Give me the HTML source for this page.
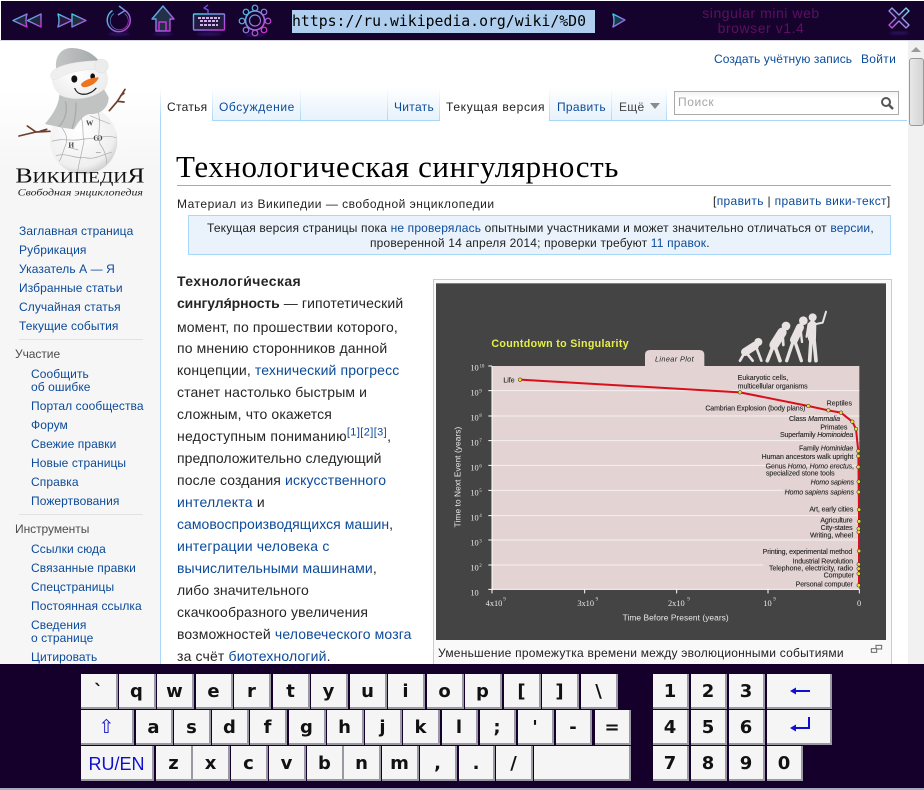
<!DOCTYPE html>
<html lang="ru"><head><meta charset="utf-8"><title>singular mini web browser</title>
<style>
html,body{margin:0;padding:0;background:#fff}
#p{position:relative;width:924px;height:790px;overflow:hidden;background:#fff;font-family:"Liberation Sans","DejaVu Sans",sans-serif;font-size:12px;color:#222}
#p div,#p span.a{position:absolute;white-space:nowrap}
.l{color:#0b4a9a}
a{color:#0b4a9a;text-decoration:none}
.s{line-height:18px;height:18px;letter-spacing:.08px;color:#0b4a9a}
.h{line-height:18px;height:18px;letter-spacing:-.05px;color:#4d4d4d}
.b{font-size:14px;line-height:22px;height:22px;letter-spacing:.13px;color:#252525;left:177px}
.t{line-height:18px;height:18px;letter-spacing:.3px}
.k{background:#f5f5f5;border-right:2px solid #9a98a2;border-bottom:2px solid #9a98a2;box-sizing:border-box;height:35px;top:0;font:bold 18px/35px "DejaVu Sans",sans-serif;color:#111;text-align:center}
.r1{top:674px}.r2{top:710px}.r3{top:746px}
.bl{color:#1010d0;font-weight:normal}
.tab{top:88px;height:33px;box-sizing:border-box;background:linear-gradient(#fff,#a7d7f9) right/1px 100% no-repeat,linear-gradient(#fff 0%,#f2f8fd 50%,#e6f2fb 100%)}
</style></head><body><div id="p">

<!-- sidebar -->
<div style="left:0;top:40px;width:160px;height:624px;background:linear-gradient(#fff 0,#fff 50px,#f6f6f6 130px)"></div>
<div style="left:160px;top:88px;width:1px;height:576px;background:linear-gradient(#fff,#a7d7f9 30px)"></div>

<!-- logo -->
<svg style="position:absolute;left:0;top:44px" width="160" height="160" viewBox="0 0 480 480">
<defs><radialGradient id="gl" cx=".42" cy=".35" r=".72"><stop offset="0" stop-color="#fff"/><stop offset=".75" stop-color="#efefef"/><stop offset="1" stop-color="#c2c2c2"/></radialGradient>
<radialGradient id="hd" cx=".45" cy=".4" r=".7"><stop offset="0" stop-color="#fff"/><stop offset="1" stop-color="#e8e8e8"/></radialGradient>
<linearGradient id="hat" x1="0" y1="0" x2="1" y2="0"><stop offset="0" stop-color="#c4c6c6"/><stop offset="1" stop-color="#a4a8a8"/></linearGradient></defs>
<g fill="none" stroke="#6f3d2a" stroke-width="5" stroke-linecap="round"><path d="M57 276 108 264 150 262M82 246 108 264M120 262 140 256"/><path d="M328 200 352 172 375 136M352 172 372 174M362 155 372 148"/></g>
<circle cx="251" cy="290" r="101" fill="url(#gl)"/>
<g fill="none" stroke="#a8a8a8" stroke-width="2"><path d="M175 235C190 260 205 270 198 300 190 320 185 340 178 352M238 205C255 240 245 270 252 290 245 330 238 350 232 388M295 205C305 240 290 270 300 300 315 320 320 340 320 358M155 292C190 280 220 295 250 285 290 285 320 270 350 282M168 335C200 325 225 345 250 340 285 350 310 330 335 325M270 215 330 240M205 310 235 318"/></g>
<g fill="#444" font-family="Liberation Serif,serif" font-size="22" font-weight="bold"><text x="258" y="245">W</text><text x="205" y="310">И</text><text x="280" y="290">Ѡ</text><text x="288" y="328" font-size="14">—</text></g>
<ellipse cx="240" cy="106" rx="84" ry="66" fill="url(#hd)"/>
<path d="M168 70C165 30 190 10 218 12 252 14 280 28 298 52L290 62C250 58 200 64 168 80Z" fill="url(#hat)"/>
<path d="M152 92C158 66 220 52 292 50L298 76C250 74 192 88 168 106 156 110 150 102 152 92Z" fill="#efefef" stroke="#d8d8d8"/>
<circle cx="304" cy="66" r="21" fill="#ececec" stroke="#d4d4d4"/>
<path d="M178 152C210 172 275 168 312 136L326 160C326 192 300 212 270 210 250 212 236 232 222 256L182 250 135 240C152 218 176 190 178 152Z" fill="#c0c3c2"/>
<path d="M196 172C204 200 195 230 176 248M228 176C228 205 226 226 216 254" stroke="#a8abab" stroke-width="4" fill="none"/>
<ellipse cx="223" cy="105" rx="9" ry="11" fill="#111"/><ellipse cx="278" cy="97" rx="7" ry="9" fill="#111"/>
<path d="M243 120C255 106 278 100 296 100 294 112 276 126 258 129 250 131 243 128 243 120Z" fill="#ee7420"/>
<path d="M224 132C232 156 266 158 289 132" fill="none" stroke="#111" stroke-width="3.5"/>
<text x="240" y="416" text-anchor="middle" font-family="Liberation Serif,serif" font-size="62" textLength="388" lengthAdjust="spacingAndGlyphs" fill="#111">В<tspan font-size="47">ИКИПЕДИ</tspan>Я</text>
<text x="241" y="455" text-anchor="middle" font-family="Liberation Serif,serif" font-size="29" font-style="italic" textLength="376" lengthAdjust="spacingAndGlyphs" fill="#222">Свободная энциклопедия</text>
</svg>

<!-- sidebar links -->
<div class="s" style="left:19px;top:222px">Заглавная страница</div>
<div class="s" style="left:19px;top:241px">Рубрикация</div>
<div class="s" style="left:19px;top:260px">Указатель А — Я</div>
<div class="s" style="left:19px;top:279px">Избранные статьи</div>
<div class="s" style="left:19px;top:298px">Случайная статья</div>
<div class="s" style="left:19px;top:317px">Текущие события</div>
<div style="left:19px;top:339px;width:124px;height:1px;background:#e2e2e2"></div>
<div class="h" style="left:15px;top:345px">Участие</div>
<div class="s" style="left:31px;top:365px">Сообщить</div>
<div class="s" style="left:31px;top:378px">об ошибке</div>
<div class="s" style="left:31px;top:397px">Портал сообщества</div>
<div class="s" style="left:31px;top:416px">Форум</div>
<div class="s" style="left:31px;top:435px">Свежие правки</div>
<div class="s" style="left:31px;top:454px">Новые страницы</div>
<div class="s" style="left:31px;top:473px">Справка</div>
<div class="s" style="left:31px;top:492px">Пожертвования</div>
<div style="left:19px;top:514px;width:124px;height:1px;background:#e2e2e2"></div>
<div class="h" style="left:15px;top:520px">Инструменты</div>
<div class="s" style="left:31px;top:540px">Ссылки сюда</div>
<div class="s" style="left:31px;top:559px">Связанные правки</div>
<div class="s" style="left:31px;top:578px">Спецстраницы</div>
<div class="s" style="left:31px;top:597px">Постоянная ссылка</div>
<div class="s" style="left:31px;top:616px">Сведения</div>
<div class="s" style="left:31px;top:629px">о странице</div>
<div class="s" style="left:31px;top:648px">Цитировать</div>

<!-- top links -->
<div class="t l" style="left:714px;top:50px;letter-spacing:.1px">Создать учётную запись</div>
<div class="t l" style="left:861px;top:50px">Войти</div>

<!-- tabs -->
<div class="tab" style="left:161px;width:52px;background:linear-gradient(#fff,#a7d7f9) right/1px 100% no-repeat,#fff"></div>
<div class="tab" style="left:213px;width:88px"></div>
<div class="tab" style="left:301px;width:87px"></div>
<div class="tab" style="left:388px;width:52px"></div>
<div class="tab" style="left:440px;width:110px;background:linear-gradient(#fff,#a7d7f9) right/1px 100% no-repeat,#fff"></div>
<div class="tab" style="left:550px;width:62px"></div>
<div class="tab" style="left:612px;width:55px"></div>
<div style="left:213px;top:120px;width:227px;height:1px;background:#a7d7f9"></div>
<div style="left:550px;top:120px;width:357px;height:1px;background:#a7d7f9"></div>
<div class="t" style="left:167px;top:98px">Статья</div>
<div class="t l" style="left:219px;top:98px;letter-spacing:.6px">Обсуждение</div>
<div class="t l" style="left:394px;top:98px">Читать</div>
<div class="t" style="left:446px;top:98px;letter-spacing:.66px">Текущая версия</div>
<div class="t l" style="left:557px;top:98px">Править</div>
<div class="t" style="left:619px;top:98px;color:#444">Ещё</div>
<svg style="position:absolute;left:650px;top:103px" width="10" height="7"><path d="M0 0H10L5 6Z" fill="#8b8b8b"/></svg>
<div style="left:674px;top:91px;width:225px;height:24px;box-sizing:border-box;border:1px solid #aaa;background:linear-gradient(#f3f3f3,#fff 30%)"></div>
<div class="t" style="left:678px;top:93px;color:#a5a5a5;letter-spacing:.6px">Поиск</div>
<svg style="position:absolute;left:880px;top:96px" width="14" height="14" viewBox="0 0 14 14"><circle cx="6" cy="6" r="4" fill="none" stroke="#555" stroke-width="2"/><path d="M9 9 13 13" stroke="#555" stroke-width="2.4"/></svg>

<!-- title -->
<div style="left:176px;top:148px;font:31px/38px 'Liberation Serif',serif;letter-spacing:.58px;color:#000">Технологическая сингулярность</div>
<div style="left:177px;top:185px;width:714px;height:1px;background:#aaa"></div>
<div class="t" style="left:177px;top:195px;letter-spacing:.5px">Материал из Википедии — свободной энциклопедии</div>
<div class="t" style="left:713px;top:192px;letter-spacing:.35px">[<a>править</a> | <a>править вики-текст</a>]</div>

<!-- notice -->
<div style="left:188px;top:215px;width:703px;height:40px;box-sizing:border-box;background:#eaf3fb;border:1px solid #a7d7f9"></div>
<div class="t" style="left:207px;top:219px;letter-spacing:.16px">Текущая версия страницы пока <a>не проверялась</a> опытными участниками и может значительно отличаться от <a>версии</a>,</div>
<div class="t" style="left:370px;top:234px;letter-spacing:.18px">проверенной 14 апреля 2014; проверки требуют <a>11 правок</a>.</div>

<!-- body -->
<div class="b" style="top:270px"><b style="letter-spacing:.4px">Технологи́ческая</b></div>
<div class="b" style="top:292px"><b style="letter-spacing:-.1px">сингуля́рность</b> — гипотетический</div>
<div class="b" style="top:316px">момент, по прошествии которого,</div>
<div class="b" style="top:337px">по мнению сторонников данной</div>
<div class="b" style="top:359px">концепции, <a>технический прогресс</a></div>
<div class="b" style="top:381px">станет настолько быстрым и</div>
<div class="b" style="top:403px">сложным, что окажется</div>
<div class="b" style="top:425px;letter-spacing:.23px">недоступным пониманию<sup style="font-size:11px;line-height:0;color:#0b4a9a;letter-spacing:.4px">[1][2][3]</sup>,</div>
<div class="b" style="top:447px;letter-spacing:.05px">предположительно следующий</div>
<div class="b" style="top:469px">после создания <a>искусственного</a></div>
<div class="b" style="top:491px;letter-spacing:.22px"><a>интеллекта</a> и</div>
<div class="b" style="top:513px;letter-spacing:.04px"><a>самовоспроизводящихся машин</a>,</div>
<div class="b" style="top:535px;letter-spacing:.18px"><a>интеграции человека с</a></div>
<div class="b" style="top:557px;letter-spacing:.11px"><a>вычислительными машинами</a>,</div>
<div class="b" style="top:579px">либо значительного</div>
<div class="b" style="top:601px">скачкообразного увеличения</div>
<div class="b" style="top:623px">возможностей <a>человеческого мозга</a></div>
<div class="b" style="top:645px;letter-spacing:.15px">за счёт <a>биотехнологий</a>.</div>

<!-- thumb -->
<div style="left:433px;top:279px;width:459px;height:390px;box-sizing:border-box;border:1px solid #c8ccd1;background:#f9f9f9"></div>
<svg style="position:absolute;left:430px;top:280px" width="470" height="385" viewBox="0 0 1410 1155" font-family="Liberation Sans,sans-serif" font-size="20" fill="#222">
<rect x="18" y="10" width="1350" height="1070" fill="#444"/>
<path d="M645 258V225Q645 210 660 210H808Q823 210 823 225V258Z" fill="#e3d3d3"/>
<rect x="186" y="258" width="1102" height="670" fill="#e3d3d3"/>
<g stroke="#f6f0f0" stroke-width="3"><path d="M186 332H1288M186 408H1288M186 482H1288M186 556H1288M186 631H1060M186 707H1288M186 780H1288M186 855H1000"/></g>
<path d="M186 258V928H1288" fill="none" stroke="#fff" stroke-width="3"/>
<g stroke="#fff" stroke-width="3"><path d="M175 258H186M175 332H186M175 408H186M175 482H186M175 556H186M175 631H186M175 707H186M175 780H186M175 855H186M175 928H186M186 928V940M464 928V940M740 928V940M1014 928V940M1288 928V940"/></g>
<path d="M270 299 930 337 1135 378 1195 391 1233 398 1267 425 1278 447 1285 515 1287 700 1287 915" fill="none" stroke="#d8101c" stroke-width="6"/>
<g fill="#e8e030" stroke="#222" stroke-width="1.5"><circle cx="270" cy="299" r="5.500"/><circle cx="930" cy="337" r="5.500"/><circle cx="1135" cy="378" r="5.500"/><circle cx="1195" cy="391" r="5.500"/><circle cx="1233" cy="398" r="5.500"/><circle cx="1267" cy="425" r="5.500"/><circle cx="1278" cy="447" r="5.500"/><circle cx="1285" cy="513" r="5.500"/><circle cx="1285" cy="528" r="5.500"/><circle cx="1285" cy="561" r="5.500"/><circle cx="1286" cy="605" r="5.500"/><circle cx="1286" cy="636" r="5.500"/><circle cx="1287" cy="689" r="5.500"/><circle cx="1287" cy="724" r="5.500"/><circle cx="1286" cy="746" r="5.500"/><circle cx="1286" cy="756" r="5.500"/><circle cx="1287" cy="813" r="5.500"/><circle cx="1286" cy="853" r="5.500"/><circle cx="1286" cy="866" r="5.500"/><circle cx="1286" cy="881" r="5.500"/><circle cx="1286" cy="916" r="5.500"/></g>
<text x="184" y="201" font-size="32" font-weight="bold" fill="#e6f04a" textLength="412">Countdown to Singularity</text>
<text x="733" y="244" font-size="22" font-style="italic" text-anchor="middle" textLength="116">Linear Plot</text>
<!-- evolution silhouettes -->
<g fill="#e8e2e2"><circle cx="985" cy="186" r="12"/><circle cx="1068" cy="138" r="13"/><circle cx="1120" cy="122" r="13"/><circle cx="1148" cy="112" r="12"/></g>
<g fill="none" stroke="#e8e2e2" stroke-linecap="round" stroke-linejoin="round">
<path d="M975 197 945 216" stroke-width="24"/><path d="M945 216 930 242M952 222 968 242M978 200 994 242" stroke-width="8"/>
<path d="M1056 157 1032 195" stroke-width="28"/><path d="M1030 197 1012 242M1036 202 1050 242" stroke-width="11"/><path d="M1058 165 1060 195" stroke-width="8"/>
<path d="M1110 142 1092 180" stroke-width="24"/><path d="M1090 182 1070 242M1096 188 1114 242" stroke-width="10"/><path d="M1112 150 1116 186" stroke-width="7"/>
<path d="M1147 134 1146 175" stroke-width="24"/><path d="M1143 178 1139 242M1152 178 1158 242" stroke-width="11"/><path d="M1136 132 1130 170" stroke-width="7"/><path d="M1158 132 1178 128 1188 95" stroke-width="6"/>
</g>
<g font-family="Liberation Serif,serif" font-size="25" fill="#e8e8e8"><text x="121" y="272">10</text><text x="121" y="347">10</text><text x="121" y="421">10</text><text x="121" y="496">10</text><text x="121" y="572">10</text><text x="121" y="646">10</text><text x="121" y="721">10</text><text x="121" y="797">10</text><text x="121" y="871">10</text><text x="121" y="946">10</text>
<g font-size="14"><text x="149" y="262">10</text><text x="148" y="337">9</text><text x="148" y="411">8</text><text x="148" y="486">7</text><text x="148" y="562">6</text><text x="148" y="636">5</text><text x="148" y="711">4</text><text x="148" y="787">3</text><text x="148" y="861">2</text><text x="220" y="962">9</text><text x="497" y="962">9</text><text x="772" y="962">9</text><text x="1030" y="962">9</text></g>
<text x="167" y="978">4x10</text><text x="442" y="978">3x10</text><text x="714" y="978">2x10</text><text x="1000" y="978">10</text><text x="1281" y="978">0</text></g>
<text x="578" y="1021" font-size="25" fill="#e8e8e8" textLength="318">Time Before Present (years)</text>
<text transform="translate(91 742) rotate(-90)" font-size="25" fill="#e8e8e8" textLength="302">Time to Next Event (years)</text>
<g font-size="21" stroke="#222" stroke-width=".3">
<text x="220" y="308">Life</text><text x="923" y="300">Eukaryotic cells,</text><text x="923" y="325" textLength="210">multicellular organisms</text><text x="826" y="392" textLength="300">Cambrian Explosion (body plans)</text><text x="1190" y="377">Reptiles</text>
<text x="1077" y="423" textLength="153">Class <tspan font-style="italic">Mammalia</tspan></text><text x="1171" y="448" textLength="81">Primates</text><text x="1050" y="471" textLength="220">Superfamily <tspan font-style="italic">Hominoidea</tspan></text><text x="1107" y="512" textLength="163">Family <tspan font-style="italic">Hominidae</tspan></text><text x="995" y="537" textLength="275">Human ancestors walk upright</text><text x="1007" y="566" textLength="265">Genus <tspan font-style="italic">Homo, Homo erectus</tspan>,</text><text x="1008" y="586" textLength="206">specialized stone tools</text><text x="1142" y="613" font-style="italic" textLength="130">Homo sapiens</text><text x="1064" y="643" font-style="italic" textLength="208">Homo sapiens sapiens</text><text x="1138" y="694" textLength="132">Art, early cities</text><text x="1171" y="727" textLength="97">Agriculture</text><text x="1172" y="750" textLength="96">City-states</text><text x="1140" y="773" textLength="129">Writing, wheel</text><text x="998" y="822" textLength="269">Printing, experimental method</text><text x="1088" y="851" textLength="181">Industrial Revolution</text><text x="1017" y="872" textLength="252">Telephone,  electricity, radio</text><text x="1181" y="893" textLength="91">Computer</text><text x="1097" y="920" textLength="172">Personal computer</text>
</g>
<g fill="none" stroke="#666" stroke-width="3"><rect x="1338" y="1096" width="17" height="11"/><rect x="1324" y="1106" width="16" height="11" fill="#f9f9f9"/></g>
</svg>
<div class="t" style="left:438px;top:644px;letter-spacing:.235px">Уменьшение промежутка времени между эволюционными событиями</div>

<!-- scrollbar -->
<div style="left:908px;top:41px;width:16px;height:623px;background:#f1f1f1"></div>
<svg style="position:absolute;left:910px;top:46px" width="12" height="6"><path d="M1 6 6 1 11 6Z" fill="#9a9a9a"/></svg>
<div style="left:909px;top:58px;width:15px;height:68px;box-sizing:border-box;border:1px solid #999;border-radius:3px;background:linear-gradient(90deg,#e8e8e8,#d4d4d4)"></div>

<!-- toolbar -->
<div style="left:0;top:0;width:924px;height:41px;background:#fff"></div>
<div style="left:1px;top:1px;width:923px;height:39px;background:#15032e"></div>
<div style="left:0;top:40px;width:924px;height:1px;background:#d8d8e4"></div>
<svg style="position:absolute;left:0;top:0" width="924" height="40" viewBox="0 0 924 40" fill="none">
<defs><linearGradient id="n" x1="0" y1="0" x2="1" y2="1"><stop offset="0" stop-color="#35d6e8"/><stop offset="1" stop-color="#d42ad8"/></linearGradient>
<linearGradient id="g" gradientUnits="userSpaceOnUse" x1="243" y1="8" x2="267" y2="33"><stop offset="0" stop-color="#35d6e8"/><stop offset="1" stop-color="#e02ad0"/></linearGradient>
<linearGradient id="x" gradientUnits="userSpaceOnUse" x1="909" y1="8" x2="889" y2="28"><stop offset="0" stop-color="#70e8f0"/><stop offset="1" stop-color="#c840e0"/></linearGradient>
<filter id="bl"><feGaussianBlur stdDeviation="1.2"/></filter></defs>
<g fill="#3a1a80" opacity=".7" filter="url(#bl)"><ellipse cx="119" cy="34" rx="11" ry="1.500"/><ellipse cx="163" cy="34" rx="10" ry="1.500"/><ellipse cx="209" cy="34" rx="13" ry="1.500"/><ellipse cx="255" cy="35" rx="10" ry="1.500"/><ellipse cx="899" cy="33" rx="10" ry="1.500"/></g>
<g stroke="url(#n)" stroke-width="1.4" stroke-linejoin="round">
<path d="M27 14 13 20.500 27 27Q25 20.500 27 14Z" fill="#1d2a3c"/><path d="M41 14 27.500 20.500 41 27Z" fill="#1d2a3c"/>
<path d="M58 14 72 20.500 58 27Q60 20.500 58 14Z" fill="#2a1a3c"/><path d="M72 14 86 20.500 72 27Z" fill="#20303c"/>
<path d="M112.500 10.500A11.500 11.500 0 1 0 125 10.500M119 6 125 10.500 118 15" stroke-width="1.500"/><path d="M114 13.500A9 9 0 1 0 124.500 13.500" stroke-width=".8" opacity=".7"/>
<path d="M163 6 152 19 156 19 156 31 170 31 170 19 174 19Z" fill="#223048"/><path d="M159 31V22H166V31" stroke="#d030d8" stroke-width="1.500"/>
<rect x="193.500" y="14" width="31" height="16" rx="1" fill="#231a40"/><path d="M208 13V10L204 8 208 5" stroke="#7a50e0"/>
<path d="M198 18H220M200 21H218M200 25H218" stroke="#d0b0e8" stroke-width="2" stroke-dasharray="3 1"/>
<path d="M613 14 625 20 613 27Q615 20.500 613 14Z" fill="#143a4c"/>
</g>
<g stroke="url(#g)" stroke-width="1.200" fill="#15032e">
<circle cx="255" cy="8" r="2.800"/><circle cx="264" cy="12" r="2.800"/><circle cx="268" cy="21" r="2.800"/><circle cx="264" cy="30" r="2.800"/><circle cx="255" cy="33" r="2.800"/><circle cx="246" cy="30" r="2.800"/><circle cx="242" cy="21" r="2.800"/><circle cx="246" cy="12" r="2.800"/>
<circle cx="255" cy="20.500" r="9.500" stroke-width="1.600"/><circle cx="255" cy="20.500" r="5.500" stroke-width="1.200"/></g>
<path d="M892 8 899 15 906 8 909 11 902 18 909 25 906 28 899 21 892 28 889 25 896 18 889 11Z" stroke="url(#x)" stroke-width="1.300" stroke-linejoin="round" fill="#1d0c3a"/>
</svg>
<div style="left:292px;top:10px;width:303px;height:23px;background:#b0cfef;font:14.8px/23px 'DejaVu Sans Mono',monospace;color:#000">https://ru.wikipedia.org/wiki/%D0</div>
<div style="left:695px;top:6px;width:132px;text-align:center;font-size:14px;line-height:15px;letter-spacing:.55px;color:#5e0f60;white-space:normal">singular mini web<br>browser v1.4</div>

<!-- keyboard -->
<div style="left:0;top:664px;width:924px;height:124px;background:#14002a"></div>
<div style="left:0;top:788px;width:924px;height:2px;background:#a8a8c0"></div>
<div class="k r1" style="left:81px;width:37px">`</div><div class="k r1" style="left:119px;width:37px">q</div><div class="k r1" style="left:157px;width:37px">w</div><div class="k r1" style="left:196px;width:37px">e</div><div class="k r1" style="left:234px;width:37px">r</div><div class="k r1" style="left:273px;width:37px">t</div><div class="k r1" style="left:311px;width:37px">y</div><div class="k r1" style="left:350px;width:37px">u</div><div class="k r1" style="left:388px;width:37px">i</div><div class="k r1" style="left:427px;width:37px">o</div><div class="k r1" style="left:465px;width:37px">p</div><div class="k r1" style="left:504px;width:37px">[</div><div class="k r1" style="left:542px;width:37px">]</div><div class="k r1" style="left:581px;width:37px">\</div>
<div class="k r2 bl" style="left:81px;width:53px;font-size:19px">⇧</div><div class="k r2" style="left:136px;width:37px">a</div><div class="k r2" style="left:174px;width:37px">s</div><div class="k r2" style="left:212px;width:37px">d</div><div class="k r2" style="left:250px;width:37px">f</div><div class="k r2" style="left:289px;width:37px">g</div><div class="k r2" style="left:327px;width:37px">h</div><div class="k r2" style="left:365px;width:37px">j</div><div class="k r2" style="left:403px;width:37px">k</div><div class="k r2" style="left:442px;width:36px">l</div><div class="k r2" style="left:480px;width:36px">;</div><div class="k r2" style="left:518px;width:36px">'</div><div class="k r2" style="left:556px;width:36px">-</div><div class="k r2" style="left:595px;width:36px">=</div>
<div class="k r3 bl" style="left:81px;width:73px;font:18px/37px 'Liberation Sans',sans-serif">RU/EN</div><div class="k r3" style="left:156px;width:37px">z</div><div class="k r3" style="left:193px;width:37px">x</div><div class="k r3" style="left:231px;width:37px">c</div><div class="k r3" style="left:269px;width:37px">v</div><div class="k r3" style="left:307px;width:37px">b</div><div class="k r3" style="left:344px;width:37px">n</div><div class="k r3" style="left:382px;width:37px">m</div><div class="k r3" style="left:420px;width:37px">,</div><div class="k r3" style="left:459px;width:36px">.</div><div class="k r3" style="left:496px;width:37px">/</div><div class="k r3" style="left:534px;width:97px"></div>
<div class="k r1" style="left:653px;width:36px">1</div><div class="k r1" style="left:691px;width:36px">2</div><div class="k r1" style="left:729px;width:36px">3</div><div class="k r1" style="left:767px;width:65px"></div>
<div class="k r2" style="left:653px;width:36px">4</div><div class="k r2" style="left:691px;width:36px">5</div><div class="k r2" style="left:729px;width:36px">6</div><div class="k r2" style="left:767px;width:65px"></div>
<div class="k r3" style="left:653px;width:36px">7</div><div class="k r3" style="left:691px;width:36px">8</div><div class="k r3" style="left:729px;width:36px">9</div><div class="k r3" style="left:767px;width:36px">0</div>
<svg style="position:absolute;left:785px;top:684px" width="30" height="50" viewBox="0 0 30 50" fill="#1010d0"><path d="M5 7 11 3.500V6H25V8H11V10.500Z"/><path d="M5 44 11 40.500V43H23V33H25V45H11V47.500Z"/></svg>
</div></body></html>
